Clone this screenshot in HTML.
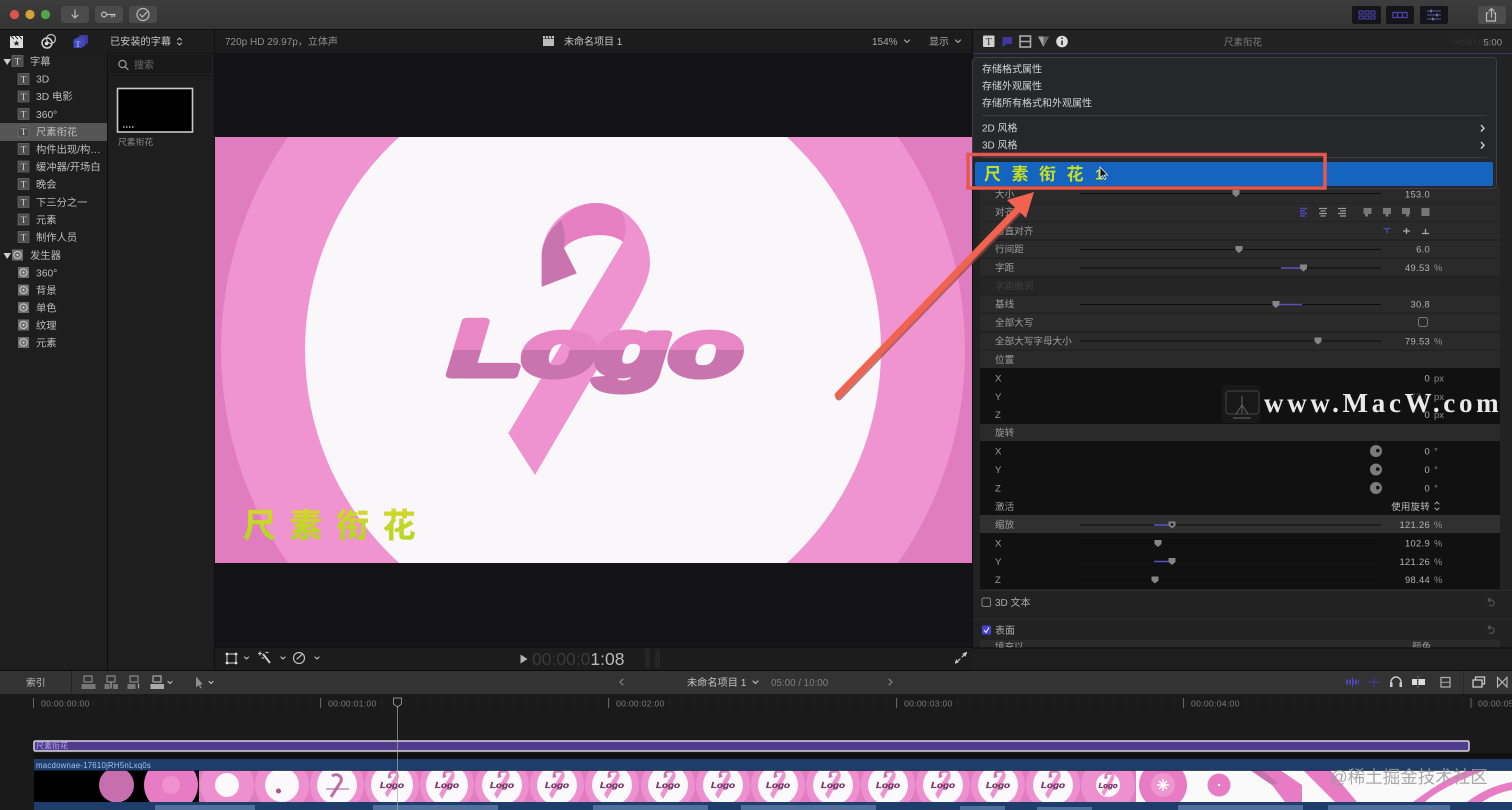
<!DOCTYPE html>
<html lang="zh">
<head>
<meta charset="utf-8">
<title>Final Cut Pro</title>
<style>
html,body{margin:0;padding:0;background:#1b1b1b;width:1512px;height:810px;overflow:hidden}
svg{display:block;position:absolute;left:0;top:0}
text{font-family:"Liberation Sans","Noto Sans CJK SC",sans-serif;font-size:10px;fill:#b4b4b4}
.s{fill:#bdbdbd;font-size:10.3px}
.l{fill:#9c9c9c;font-size:9.6px}
.m{fill:#d2d2d2;font-size:10px}
.v{fill:#b2b2b2;font-size:9.4px;text-anchor:end;letter-spacing:.3px}
.u{fill:#8f8f8f;font-size:9.4px}
.r{fill:#7a7a7a;font-size:8.6px;letter-spacing:.3px}
.ti{font-family:"Liberation Serif",serif;font-size:9.5px;fill:#d0d0d0;text-anchor:middle}
.lg{font-family:"Liberation Sans",sans-serif;font-weight:bold;font-style:italic;font-size:8.5px;fill:#7d3a6c;stroke:#7d3a6c;stroke-width:.35px;text-anchor:middle}
.ic{fill:none;stroke:#bdbdbd;stroke-width:1.2;stroke-linecap:round;stroke-linejoin:round}
</style>
</head>
<body>
<svg width="1512" height="810" viewBox="0 0 1512 810" xmlns="http://www.w3.org/2000/svg">
<defs>
<linearGradient id="tb" x1="0" y1="0" x2="0" y2="1"><stop offset="0" stop-color="#3d3d3d"/><stop offset="1" stop-color="#333"/></linearGradient>
<linearGradient id="lgf" gradientUnits="userSpaceOnUse" x1="0" y1="318" x2="0" y2="396"><stop offset=".41" stop-color="#e886c6"/><stop offset=".41" stop-color="#c974ae"/></linearGradient>
<linearGradient id="yg" x1="0" y1="0" x2="0" y2="1"><stop offset="0" stop-color="#d6d82a"/><stop offset="1" stop-color="#a6da22"/></linearGradient>
<clipPath id="vp"><rect x="215" y="137" width="757" height="426"/></clipPath>
<clipPath id="th"><rect x="34" y="770" width="1478" height="32"/></clipPath>
<path id="h" d="M-3.5,-3.5H3.5V.5L0,3.5L-3.5,.5Z" fill="#858585"/>
<g id="ticon"><rect x="-5.5" y="-5.5" width="11" height="11" fill="#4c4c4c" stroke="#777" stroke-width=".6"/></g>
<g id="gicon"><rect x="-5.5" y="-5.5" width="11" height="11" fill="#6e6e6e"/><circle r="3.6" fill="none" stroke="#c4c4c4" stroke-width="1.1"/><circle r="1" fill="#ddd"/></g>
<g id="dial"><circle r="6" fill="#7c7c7c"/><circle cx="1.8" cy="-.4" r="1.9" fill="#171717"/></g>
<g id="rb" transform="translate(-580,-340)">
<path d="M541.7,286.7L576.7,273.3L564,248.3C570,238 605,228 623,241.7L508.3,433.3L535,475L620,330C645,290 650,275 650,263C650,230 625,203 596,203C565,203 542,230 541.7,256Z" fill="#ef93d0"/>
<path d="M561,220C567,236 565,241 564,248.3C570,238 605,228 623,241.7C627,232 626,222 622,212C612,205 604,203 596,203C582,203 570,210 561,220Z" fill="#e57fc2"/>
<path d="M541.7,286.7L576.7,273.3L564,248.3C565,240 566,232 561,220C549,230 542,243 541.7,256Z" fill="#c973ae"/>
</g>
</defs>

<!-- base -->
<rect width="1512" height="810" fill="#1e1e1e"/>
<rect width="1512" height="29" fill="url(#tb)"/>
<rect y="29" width="1512" height="1" fill="#111"/>
<!-- traffic lights -->
<circle cx="14.5" cy="14.5" r="4.6" fill="#d9544f"/><circle cx="30" cy="14.5" r="4.6" fill="#d3a336"/><circle cx="45.5" cy="14.5" r="4.6" fill="#4fa64f"/>
<rect x="61" y="6" width="28" height="17" rx="3" fill="#4b4b4b"/><rect x="95" y="6" width="28" height="17" rx="3" fill="#4b4b4b"/><rect x="129" y="6" width="28" height="17" rx="3" fill="#4b4b4b"/>
<path class="ic" d="M75,10V18M72,15L75,18L78,15"/>
<circle class="ic" cx="104" cy="14.5" r="2.4"/><path class="ic" d="M106.5,14.5H115M112,14.5V17M114.5,14.5V16.5"/>
<circle class="ic" cx="143" cy="14.5" r="6"/><path class="ic" d="M140,14.5L142.3,17L147,12"/>
<rect x="1352" y="6" width="29" height="18" rx="2" fill="#151519"/><rect x="1386" y="6" width="28" height="18" rx="2" fill="#151519"/><rect x="1420" y="6" width="28" height="18" rx="2" fill="#151519"/>
<path d="M1359,11h4v3h-4zM1365,11h4v3h-4zM1371,11h4v3h-4zM1359,16h4v3h-4zM1365,16h4v3h-4zM1371,16h4v3h-4z" fill="none" stroke="#4f45b8"/>
<path d="M1393,12.5h14v5h-14zM1397.5,12.5v5M1402.5,12.5v5" fill="none" stroke="#4f45b8" stroke-width="1.2"/>
<path d="M1427,11h14M1427,15h14M1427,19h14" stroke="#5d55b0"/><path d="M1431,9.5v3M1437,13.5v3M1433,17.5v3" stroke="#aaa"/>
<rect x="1478" y="6" width="28" height="18" rx="2" fill="#4d4d4d"/>
<path class="ic" d="M1488,13h-1.5v8h9v-8H1494M1491.5,17V9M1489,11L1491.5,8.5L1494,11"/>

<!-- second row -->
<rect y="30" width="215" height="23" fill="#1d1d1d"/>
<rect x="215" y="30" width="757" height="23" fill="#1c1c1c"/>
<rect y="53" width="215" height="617" fill="#1e1e1e"/>
<rect x="107" y="53" width="1" height="617" fill="#0e0e0e"/><rect x="214" y="30" width="1" height="640" fill="#0e0e0e"/>
<rect x="108" y="52.5" width="107" height="1" fill="#141414"/>
<!-- lib icons -->
<rect x="10" y="39" width="13" height="9" fill="#ddd"/><path d="M10,36H23V39H10Z" fill="#eee"/><path d="M11,36L14,39M15,36L18,39M19,36L22,39" stroke="#222"/><path d="M16.5,40.5l1,2h2l-1.6,1.3.6,2-2-1.2-2,1.2.6-2-1.6-1.3h2z" fill="#222"/>
<circle cx="47" cy="43" r="5" fill="none" stroke="#d0d0d0" stroke-width="1.5"/><circle cx="51" cy="39" r="4.5" fill="none" stroke="#c0c0c0" stroke-width="1.2"/><circle cx="46.5" cy="43.5" r="1.8" fill="#ddd"/>
<rect x="79" y="35" width="9" height="9" rx="1" fill="#3f3aa0"/><rect x="76" y="37.5" width="9" height="9" rx="1" fill="#4a44c0"/><rect x="73.5" y="39" width="9" height="9" rx="1" fill="#3d49b8"/>
<text x="78" y="47" style="fill:#cfd2ff;font-family:'Liberation Serif',serif;font-size:8px;text-anchor:middle">T</text>
<text x="110" y="45" class="m" style="font-size:10.2px;fill:#c8c8c8">已安装的字幕</text>
<path class="ic" d="M177.5,40L179.5,38L181.5,40M177.5,43L179.5,45L181.5,43" style="stroke-width:1"/>

<!-- search -->
<rect x="110" y="55" width="102" height="18" fill="#191919"/>
<circle class="ic" cx="122.5" cy="64" r="3.6" style="stroke:#9a9a9a"/><path class="ic" d="M125,66.7L128,69.5" style="stroke:#9a9a9a"/>
<text x="134" y="68.5" style="fill:#6b6b6b;font-size:10px">搜索</text>
<rect x="108" y="75" width="106" height="1" fill="#151515"/>
<rect x="117.5" y="88.5" width="75" height="43.5" fill="#000" stroke="#c8c8c8" stroke-width="1.6"/>
<path d="M123,127h1.5M126,127h1.5M129,127h1.5M132,127h1.5" stroke="#888" stroke-width="2"/>
<text x="118" y="145" style="fill:#8d8d8d;font-size:8.8px">尺素衔花</text>

<!-- sidebar -->
<rect y="123" width="107" height="18" fill="#555"/>
<path d="M3.5,59H11L7.2,65Z" fill="#cfcfcf"/>
<use href="#ticon" x="17.5" y="61"/><text class="ti" x="17.5" y="64.5">T</text>
<text class="s" x="30" y="65">字幕</text>
<use href="#ticon" x="23.5" y="79"/><text class="ti" x="23.5" y="82.5">T</text><text class="s" x="36" y="82.5">3D</text>
<use href="#ticon" x="23.5" y="96.5"/><text class="ti" x="23.5" y="100">T</text><text class="s" x="36" y="100">3D 电影</text>
<use href="#ticon" x="23.5" y="114"/><text class="ti" x="23.5" y="117.5">T</text><text class="s" x="36" y="118">360°</text>
<use href="#ticon" x="23.5" y="131.5"/><text class="ti" x="23.5" y="135">T</text><text class="s" x="36" y="135.5">尺素衔花</text>
<use href="#ticon" x="23.5" y="149"/><text class="ti" x="23.5" y="152.5">T</text><text class="s" x="36" y="153">构件出现/构…</text>
<use href="#ticon" x="23.5" y="166.5"/><text class="ti" x="23.5" y="170">T</text><text class="s" x="36" y="170.5">缓冲器/开场白</text>
<use href="#ticon" x="23.5" y="184"/><text class="ti" x="23.5" y="187.5">T</text><text class="s" x="36" y="188">晚会</text>
<use href="#ticon" x="23.5" y="202"/><text class="ti" x="23.5" y="205.5">T</text><text class="s" x="36" y="206">下三分之一</text>
<use href="#ticon" x="23.5" y="219.5"/><text class="ti" x="23.5" y="223">T</text><text class="s" x="36" y="223.5">元素</text>
<use href="#ticon" x="23.5" y="237"/><text class="ti" x="23.5" y="240.5">T</text><text class="s" x="36" y="241">制作人员</text>
<path d="M3.5,253H11L7.2,259Z" fill="#cfcfcf"/>
<use href="#gicon" x="17.5" y="255"/><text class="s" x="30" y="259">发生器</text>
<use href="#gicon" x="23.5" y="272.5"/><text class="s" x="36" y="276.5">360°</text>
<use href="#gicon" x="23.5" y="290"/><text class="s" x="36" y="294">背景</text>
<use href="#gicon" x="23.5" y="307.5"/><text class="s" x="36" y="311.5">单色</text>
<use href="#gicon" x="23.5" y="325"/><text class="s" x="36" y="329">纹理</text>
<use href="#gicon" x="23.5" y="342.5"/><text class="s" x="36" y="346.5">元素</text>

<!-- viewer header -->
<text x="225" y="45" style="fill:#8f8f8f;font-size:10px">720p HD 29.97p，立体声</text>
<rect x="543" y="39" width="11" height="7" fill="#bbb"/><path d="M543,36h11v2.5h-11z" fill="#ccc"/><path d="M545,36l1,2.5M548,36l1,2.5M551,36l1,2.5" stroke="#222"/>
<text x="564" y="45" style="fill:#c2c2c2;font-size:10px">未命名项目 1</text>
<text x="872" y="45" style="fill:#a8a8a8;font-size:10px">154%</text><path class="ic" d="M904.5,40L907,42.5L909.5,40" style="stroke:#aaa"/>
<text x="929" y="45" style="fill:#a8a8a8;font-size:10px">显示</text><path class="ic" d="M955.5,40L958,42.5L960.5,40" style="stroke:#aaa"/>

<!-- viewer -->
<rect x="215" y="53" width="757" height="595" fill="#141416"/>
<g clip-path="url(#vp)">
<rect x="215" y="137" width="757" height="426" fill="#e07cc0"/>
<circle cx="593" cy="350" r="372" fill="#ef93d1"/>
<circle cx="593" cy="350" r="288" fill="#f9f7fa"/>
<use href="#rb" x="580" y="340"/>
<text x="0" y="375" transform="translate(449,0) scale(1.54,1)" style="font-family:'Liberation Sans',sans-serif;font-weight:bold;font-style:italic;font-size:78px;fill:url(#lgf);stroke:url(#lgf);stroke-width:7px;stroke-linejoin:round">Logo</text>
<text x="243" y="537" style="font-size:33px;font-weight:bold;letter-spacing:13.5px;fill:url(#yg);stroke:#d8c92a;stroke-width:.4px">尺素衔花</text>
</g>

<!-- viewer controls -->
<rect x="215" y="648" width="757" height="22" fill="#1c1c1c"/>
<rect x="215" y="647" width="757" height="1" fill="#101010"/>
<rect x="227" y="654" width="9" height="9" fill="none" stroke="#c4c4c4" stroke-width="1.1"/>
<circle cx="227" cy="654" r="1.4" fill="#ddd"/><circle cx="236" cy="654" r="1.4" fill="#ddd"/><circle cx="227" cy="663" r="1.4" fill="#ddd"/><circle cx="236" cy="663" r="1.4" fill="#ddd"/>
<path class="ic" d="M244.5,657L246.5,659L248.5,657M281,657L283,659L285,657M315,657L317,659L319,657"/>
<path d="M263,654L270,663" stroke="#ccc" stroke-width="2"/><path class="ic" d="M260,652v3M258.5,653.5h3M266,652.5h2M262,658h1.5"/>
<circle class="ic" cx="299" cy="658" r="5.5"/><path class="ic" d="M297,659L302,654.5"/>
<path d="M520.5,654.5L527.5,659L520.5,663.5Z" fill="#b5b5b5"/>
<text x="532" y="665" style="font-size:17.5px;fill:#3b3b3b">00:00:0<tspan style="fill:#b9b9b9">1:08</tspan></text>
<rect x="645" y="649" width="5" height="19" fill="#262626"/><rect x="655" y="649" width="5" height="19" fill="#262626"/>
<path class="ic" d="M963,654l3.5,-1.5l-1.5,3.5M965.5,653.5L962,657M958,662l-2.5,1l1,-3M956.5,662.5L960,659" style="stroke:#ccc"/>

<!-- inspector -->
<rect x="972" y="30" width="540" height="640" fill="#222"/>
<rect x="972" y="30" width="1" height="640" fill="#0e0e0e"/>
<rect x="973" y="53" width="539" height="1" fill="#3a3570"/>
<rect x="983" y="35.5" width="11.5" height="11.5" rx="1" fill="#cfcfcf"/><text x="988.7" y="45" style="font-family:'Liberation Serif',serif;font-size:10px;fill:#333;text-anchor:middle">T</text>
<path d="M1002.5,37H1012V44H1006L1003,47H1002.5Z" fill="#3e389f"/>
<rect x="1020" y="36" width="10.5" height="11" fill="none" stroke="#aaa" stroke-width="1.6"/><path d="M1020,41.5H1030" stroke="#aaa" stroke-width="1.5"/>
<path d="M1038,36.5H1049L1043.5,47Z" fill="#a2a2a2"/><path d="M1043.5,36.5H1049L1043.5,47Z" fill="#636363"/>
<circle cx="1062" cy="41.5" r="5.8" fill="#dcdcdc"/><path d="M1062,40.5V45M1062,37.5V39" stroke="#222" stroke-width="1.5"/>
<text x="1243" y="45.5" style="fill:#7c7c7c;font-size:9.5px;text-anchor:middle">尺素衔花</text>
<text x="1502" y="45.5" style="fill:#333;font-size:9.5px;text-anchor:end">00:00:0<tspan style="fill:#9a9a9a">5:00</tspan></text>

<!-- rows -->
<g fill="#2a2a2a">
<rect x="980" y="186" width="520" height="17"/>
<rect x="980" y="204" width="520" height="17"/>
<rect x="980" y="222" width="520" height="17"/>
<rect x="980" y="241" width="520" height="16.5"/>
<rect x="980" y="259" width="520" height="16.5"/>
<rect x="980" y="278" width="520" height="16.5" fill="#252525"/>
<rect x="980" y="296" width="520" height="16.5"/>
<rect x="980" y="314" width="520" height="16.5"/>
<rect x="980" y="333" width="520" height="16.5"/>
<rect x="980" y="351" width="520" height="17"/>
<rect x="980" y="424" width="520" height="17"/>
<rect x="980" y="515" width="520" height="18" fill="#303030"/>
</g>
<rect x="980" y="368" width="520" height="56" fill="#111"/>
<rect x="980" y="441" width="520" height="74" fill="#111"/>
<rect x="980" y="533" width="520" height="56" fill="#111"/>
<rect x="973" y="590" width="539" height="1" fill="#2c2c2c"/>
<rect x="973" y="618.5" width="539" height="1" fill="#2c2c2c"/>
<rect x="980" y="640" width="520" height="8" fill="#2a2a2a"/>

<g>
<text class="l" x="995" y="197.5">大小</text>
<text class="l" x="995" y="215.5">对齐</text>
<text class="l" x="995" y="234.5">垂直对齐</text>
<text class="l" x="995" y="252.5">行间距</text>
<text class="l" x="995" y="271">字距</text>
<text class="l" x="995" y="289.5" style="fill:#3f3f3f">字距微调</text>
<text class="l" x="995" y="307.5">基线</text>
<text class="l" x="995" y="326">全部大写</text>
<text class="l" x="995" y="344.5">全部大写字母大小</text>
<text class="l" x="995" y="363">位置</text>
<text class="l" x="995" y="381.5">X</text>
<text class="l" x="995" y="400">Y</text>
<text class="l" x="995" y="418">Z</text>
<text class="l" x="995" y="436">旋转</text>
<text class="l" x="995" y="454.5">X</text>
<text class="l" x="995" y="473">Y</text>
<text class="l" x="995" y="491.5">Z</text>
<text class="l" x="995" y="510">激活</text>
<text class="l" x="995" y="528">缩放</text>
<text class="l" x="995" y="546.5">X</text>
<text class="l" x="995" y="565">Y</text>
<text class="l" x="995" y="583">Z</text>
</g>
<!-- sliders -->
<g stroke="#0c0c0c" stroke-width="1">
<path d="M1080,193.5H1381M1080,249.5H1381M1080,268H1381M1080,304.5H1381M1080,341H1381M1080,525H1381M1080,543.5H1381M1080,561.5H1381M1080,580H1381"/>
</g>
<path d="M1281,268H1303M1276,304.5H1302M1154,525H1172M1154,561.5H1172" stroke="#5a4fc0" stroke-width="1.5"/>
<use href="#h" x="1236" y="193.5"/><use href="#h" x="1239" y="249.5"/><use href="#h" x="1303.5" y="268"/><use href="#h" x="1276" y="304.5"/><use href="#h" x="1318" y="341"/>
<use href="#h" x="1172" y="525"/><circle cx="1172" cy="524.5" r="1.5" fill="#222"/><use href="#h" x="1158" y="543.5"/><use href="#h" x="1172" y="561.5"/><use href="#h" x="1155" y="580"/>
<g>
<text class="v" x="1430" y="197.5">153.0</text>
<text class="v" x="1430" y="252.5">6.0</text>
<text class="v" x="1430" y="271">49.53</text><text class="u" x="1434" y="271">%</text>
<text class="v" x="1430" y="307.5">30.8</text>
<text class="v" x="1430" y="344.5">79.53</text><text class="u" x="1434" y="344.5">%</text>
<text class="v" x="1430" y="381.5">0</text><text class="u" x="1434" y="381.5">px</text>
<text class="v" x="1430" y="400" style="fill:#555">-72.0</text><text class="u" x="1434" y="400">px</text>
<text class="v" x="1430" y="418">0</text><text class="u" x="1434" y="418">px</text>
<text class="v" x="1430" y="454.5">0</text><text class="u" x="1434" y="454.5">°</text>
<text class="v" x="1430" y="473">0</text><text class="u" x="1434" y="473">°</text>
<text class="v" x="1430" y="491.5">0</text><text class="u" x="1434" y="491.5">°</text>
<text class="v" x="1430" y="510" style="fill:#c0c0c0">使用旋转</text>
<path class="ic" d="M1435,504L1437,502L1439,504M1435,508L1437,510L1439,508" style="stroke:#aaa;stroke-width:1"/>
<text class="v" x="1430" y="528">121.26</text><text class="u" x="1434" y="528">%</text>
<text class="v" x="1430" y="546.5">102.9</text><text class="u" x="1434" y="546.5">%</text>
<text class="v" x="1430" y="565">121.26</text><text class="u" x="1434" y="565">%</text>
<text class="v" x="1430" y="583">98.44</text><text class="u" x="1434" y="583">%</text>
</g>
<use href="#dial" x="1376" y="451"/><use href="#dial" x="1376" y="469.5"/><use href="#dial" x="1376" y="488"/>
<rect x="1418.5" y="317.5" width="9" height="9" rx="2" fill="none" stroke="#777"/>
<!-- align icons -->
<path d="M1300,208.5H1307M1300,211H1305M1300,213.5H1307M1300,216H1305" stroke="#4f45b8" stroke-width="1.5"/>
<path d="M1319,208.5H1327M1320.5,211H1325.5M1319,213.5H1327M1320.5,216H1325.5" stroke="#999" stroke-width="1.2"/>
<path d="M1338,208.5H1346M1340,211H1346M1338,213.5H1346M1340,216H1346" stroke="#999" stroke-width="1.2"/>
<rect x="1363.5" y="208" width="8" height="6" fill="#777"/><rect x="1365" y="214" width="3" height="2.5" fill="#777"/>
<rect x="1383" y="208" width="8" height="6" fill="#777"/><rect x="1385.5" y="214" width="3" height="2.5" fill="#777"/>
<rect x="1402" y="208" width="8" height="6" fill="#777"/><rect x="1406" y="214" width="3" height="2.5" fill="#777"/>
<rect x="1421.5" y="208" width="8" height="8" fill="#777"/>
<path d="M1383.5,228.5H1390.5M1387,228.5V233" stroke="#4f45b8" stroke-width="1.3"/>
<path d="M1403,231H1410M1406.5,228V234" stroke="#aaa" stroke-width="1.3"/>
<path d="M1422,233.5H1429M1425.5,229V233.5" stroke="#aaa" stroke-width="1.3"/>

<!-- 3d / surface -->
<rect x="982" y="598" width="8.5" height="8.5" rx="1.5" fill="none" stroke="#808080"/>
<text x="995" y="606" style="fill:#aaa;font-size:10px">3D 文本</text>
<path class="ic" d="M1488,600H1491.5A3,3 0 1 1 1489.5,605.5M1488,600L1490,598M1488,600L1490,602" style="stroke:#5f5f5f;stroke-width:1"/>
<rect x="982" y="625.5" width="9" height="9" rx="1.5" fill="#4a42d0"/><path d="M984,630L986,632.5L989,627.5" stroke="#fff" fill="none"/>
<text x="995" y="634" style="fill:#aaa;font-size:10px">表面</text>
<path class="ic" d="M1488,627.5H1491.5A3,3 0 1 1 1489.5,633M1488,627.5L1490,625.5M1488,627.5L1490,629.5" style="stroke:#5f5f5f;stroke-width:1"/>
<text class="l" x="995" y="650">填充以</text><text class="l" x="1412" y="650">颜色</text>
<rect x="972" y="647.5" width="540" height="23" fill="#1e1e1e"/>
<rect x="972" y="647.5" width="540" height="1" fill="#0a0a0a"/>

<!-- menu -->
<rect x="972.5" y="57.5" width="524" height="131" rx="4" fill="#25272a" stroke="#3c3e40"/>
<text class="m" x="982" y="72.5">存储格式属性</text>
<text class="m" x="982" y="89.5">存储外观属性</text>
<text class="m" x="982" y="106.5">存储所有格式和外观属性</text>
<rect x="982" y="115" width="505" height="1" fill="#3b3d3f"/>
<text class="m" x="982" y="131.5">2D 风格</text>
<text class="m" x="982" y="148.5">3D 风格</text>
<path d="M1481,125L1484,128.3L1481,131.5M1481,142L1484,145.3L1481,148.5" fill="none" stroke="#ddd" stroke-width="1.3"/>
<rect x="982" y="157" width="505" height="1" fill="#3b3d3f"/>
<rect x="975" y="162" width="518" height="24" rx="2" fill="#1565c0"/>
<text x="984" y="180" style="font-size:17px;font-weight:bold;letter-spacing:10.5px;fill:#c6de22">尺素衔花</text>
<text x="1095" y="179.5" style="font-size:15px;font-weight:bold;fill:#c6de22">1</text>
<path d="M1100,167V178L1102.5,175.5L1104.5,179.5L1106,178.8L1104,175H1107.5Z" fill="#111" stroke="#eee" stroke-width=".8"/>

<!-- red box + arrow -->
<rect x="968" y="154.5" width="357" height="33.5" fill="none" stroke="#e8574c" stroke-width="3.5"/>
<path d="M838,396L1019,209" stroke="#9a4a44" stroke-width="7" stroke-linecap="round" transform="translate(.8,1)" opacity=".7"/>
<path d="M838,395L1019,208" stroke="#f1634f" stroke-width="6.5" stroke-linecap="round"/>
<path d="M1034,192L1007,200L1026,218Z" fill="#f1634f"/>

<!-- watermark -->
<rect x="1222" y="385" width="38" height="38" rx="4" fill="#1b1b1b" opacity=".7"/>
<rect x="1226" y="391" width="33" height="23" rx="3" fill="none" stroke="#444"/>
<path d="M1242,396V413M1236,414L1242,405L1248,414M1233,418H1251" fill="none" stroke="#666"/>
<text x="1264" y="412" style="font-family:'Liberation Serif',serif;font-weight:bold;font-size:27px;letter-spacing:3.7px;fill:#e9e9e9">www.MacW.com</text>

<!-- timeline toolbar -->
<rect y="670" width="1512" height="1" fill="#0c0c0c"/>
<rect y="671" width="1512" height="23" fill="#333"/>
<rect x="71" y="671" width="1" height="23" fill="#242424"/>
<text x="26" y="686" style="fill:#bdbdbd;font-size:9.8px">索引</text>
<path class="ic" d="M84,676h8v6h-8z" style="stroke:#888"/><rect x="81.5" y="684" width="14" height="5" fill="#777"/>
<path class="ic" d="M107,676h8v6h-8z" style="stroke:#888"/><rect x="104.5" y="684" width="5" height="5" fill="#777"/><rect x="113" y="684" width="5" height="5" fill="#777"/><path class="ic" d="M111,683V688" style="stroke:#aaa"/>
<path class="ic" d="M130,676h8v6h-8z" style="stroke:#888"/><rect x="127.5" y="684" width="8" height="5" fill="#777"/><path class="ic" d="M138.5,684V688" style="stroke:#aaa"/>
<path class="ic" d="M153,676h8v6h-8z" style="stroke:#aaa"/><rect x="150.5" y="684" width="13.5" height="5" fill="#aaa"/>
<path class="ic" d="M168,681.5L170,683.5L172,681.5M209,681.5L211,683.5L213,681.5"/>
<path d="M196,676.5V687.5L198.5,685L200.5,688.5L201.5,688L200,684.5H203Z" fill="#8e8e8e"/>
<path class="ic" d="M623,679L620,682L623,685M889,679L892,682L889,685" style="stroke:#888"/>
<text x="687" y="686" style="fill:#c2c2c2;font-size:10.2px">未命名项目 1</text>
<path class="ic" d="M753,681L755.5,683.5L758,681"/>
<text x="771" y="686" style="fill:#7e7e7e;font-size:9.8px">05:00 / 10:00</text>
<path d="M1346,682H1359" stroke="#4f45b8" stroke-width="5" stroke-dasharray="2 1"/><path d="M1352.5,677V687" stroke="#4f45b8"/>
<path d="M1368,682H1380M1374,677V687" stroke="#3f3a90" stroke-width="1.3"/>
<path class="ic" d="M1391,685V682A5,5 0 0 1 1401,682V685" style="stroke:#ccc;stroke-width:1.4"/><rect x="1390" y="682.5" width="2.5" height="4.5" fill="#ccc"/><rect x="1399.5" y="682.5" width="2.5" height="4.5" fill="#ccc"/>
<rect x="1412" y="679" width="5" height="6" fill="#ddd"/><rect x="1418.5" y="679" width="6.5" height="6" fill="#ddd"/><path d="M1418,676V688" stroke="#888" stroke-dasharray="1.5 1"/>
<rect x="1441" y="677.5" width="9" height="9.5" fill="none" stroke="#aaa" stroke-width="1.3"/><path d="M1441,682.3H1450" stroke="#aaa"/>
<rect x="1463" y="671" width="1" height="23" fill="#292929"/>
<rect x="1473" y="680" width="9" height="7" fill="none" stroke="#ccc" stroke-width="1.3"/><path d="M1475.5,680V677H1484.5V684H1482" fill="none" stroke="#ccc" stroke-width="1.3"/>
<path d="M1497.5,677.5V687L1507,677.5V687Z" fill="none" stroke="#bbb" stroke-width="1.1"/>

<!-- timeline -->
<rect y="694" width="1512" height="116" fill="#1a1a1b"/>
<path d="M33,703H1512" stroke="#232323" stroke-width="7" stroke-dasharray="1 11"/>
<path d="M33.5,698V708M320.5,698V708M608.5,698V708M896.5,698V708M1183.5,698V708M1471,698V708" stroke="#666"/>
<text class="r" x="41" y="706.5">00:00:00:00</text>
<text class="r" x="328" y="706.5">00:00:01:00</text>
<text class="r" x="616" y="706.5">00:00:02:00</text>
<text class="r" x="904" y="706.5">00:00:03:00</text>
<text class="r" x="1191" y="706.5">00:00:04:00</text>
<text class="r" x="1478" y="706.5">00:00:05</text>

<!-- title clip -->
<rect x="34" y="741" width="1435" height="10" rx="1.5" fill="#4f3a8c" stroke="#d8d8e0" stroke-width="1.5"/>
<text x="36" y="748.7" style="fill:#b9a5f0;font-size:8px">尺素衔花</text>
<rect x="33" y="753" width="1479" height="6" fill="#141210"/>

<!-- video clip -->
<rect x="34" y="759" width="1478" height="51" fill="#1d3d6a"/>
<text x="36" y="768" style="fill:#a9c2e6;font-size:7.8px;letter-spacing:.25px">macdownae-17610jRH5nLxq0s</text>
<rect x="34" y="770" width="165" height="32" fill="#000"/>
<g clip-path="url(#th)">
<circle cx="116.5" cy="785" r="17.5" fill="#c76fae"/>
<circle cx="171" cy="785" r="27" fill="#e87cc4"/><circle cx="171" cy="785" r="9" fill="#f090cf"/>
<rect x="199" y="770" width="937" height="32" fill="#e27cc0"/>
<rect x="1136" y="770" width="376" height="32" fill="#fafafa"/>
<g fill="#ee90cf">
<circle cx="227" cy="785" r="27"/><circle cx="282" cy="785" r="27"/><circle cx="337" cy="785" r="27"/><circle cx="392" cy="785" r="27"/><circle cx="447" cy="785" r="27"/><circle cx="502" cy="785" r="27"/><circle cx="557" cy="785" r="27"/><circle cx="612" cy="785" r="27"/><circle cx="668" cy="785" r="27"/><circle cx="723" cy="785" r="27"/><circle cx="778" cy="785" r="27"/><circle cx="833" cy="785" r="27"/><circle cx="888" cy="785" r="27"/><circle cx="943" cy="785" r="27"/><circle cx="998" cy="785" r="27"/><circle cx="1053" cy="785" r="27"/><circle cx="1108" cy="785" r="27"/>
</g>
<g fill="#fbf9fb">
<circle cx="227" cy="785" r="12"/><circle cx="282" cy="785" r="17"/><circle cx="337" cy="785" r="20"/><circle cx="392" cy="785" r="21"/><circle cx="447" cy="785" r="21"/><circle cx="502" cy="785" r="20"/><circle cx="557" cy="785" r="20"/><circle cx="612" cy="785" r="20"/><circle cx="668" cy="785" r="20"/><circle cx="723" cy="785" r="20"/><circle cx="778" cy="785" r="20"/><circle cx="833" cy="785" r="20"/><circle cx="888" cy="785" r="20"/><circle cx="943" cy="785" r="20"/><circle cx="998" cy="785" r="20"/><circle cx="1053" cy="785" r="20"/><circle cx="1108" cy="785" r="12"/>
</g>
<circle cx="278.5" cy="791" r="2.5" fill="#a85590"/>
<path d="M332,776C338,772 344,778 340,783L331,797" fill="none" stroke="#c06aa6" stroke-width="3"/><path d="M326,789H349" stroke="#a85590" stroke-width="1"/>
<use href="#rb" transform="translate(392,784) scale(.1)"/><text class="lg" x="392" y="788" textLength="24" lengthAdjust="spacingAndGlyphs">Logo</text>
<use href="#rb" transform="translate(447,784) scale(.11)"/><text class="lg" x="447" y="788" textLength="24" lengthAdjust="spacingAndGlyphs">Logo</text>
<use href="#rb" transform="translate(502,784) scale(.11)"/><text class="lg" x="502" y="788" textLength="24" lengthAdjust="spacingAndGlyphs">Logo</text>
<use href="#rb" transform="translate(557,784) scale(.11)"/><text class="lg" x="557" y="788" textLength="24" lengthAdjust="spacingAndGlyphs">Logo</text>
<use href="#rb" transform="translate(612,784) scale(.11)"/><text class="lg" x="612" y="788" textLength="24" lengthAdjust="spacingAndGlyphs">Logo</text>
<use href="#rb" transform="translate(668,784) scale(.11)"/><text class="lg" x="668" y="788" textLength="24" lengthAdjust="spacingAndGlyphs">Logo</text>
<use href="#rb" transform="translate(723,784) scale(.11)"/><text class="lg" x="723" y="788" textLength="24" lengthAdjust="spacingAndGlyphs">Logo</text>
<use href="#rb" transform="translate(778,784) scale(.11)"/><text class="lg" x="778" y="788" textLength="24" lengthAdjust="spacingAndGlyphs">Logo</text>
<use href="#rb" transform="translate(833,784) scale(.11)"/><text class="lg" x="833" y="788" textLength="24" lengthAdjust="spacingAndGlyphs">Logo</text>
<use href="#rb" transform="translate(888,784) scale(.11)"/><text class="lg" x="888" y="788" textLength="24" lengthAdjust="spacingAndGlyphs">Logo</text>
<use href="#rb" transform="translate(943,784) scale(.11)"/><text class="lg" x="943" y="788" textLength="24" lengthAdjust="spacingAndGlyphs">Logo</text>
<use href="#rb" transform="translate(998,784) scale(.11)"/><text class="lg" x="998" y="788" textLength="24" lengthAdjust="spacingAndGlyphs">Logo</text>
<use href="#rb" transform="translate(1053,784) scale(.11)"/><text class="lg" x="1053" y="788" textLength="24" lengthAdjust="spacingAndGlyphs">Logo</text>
<use href="#rb" transform="translate(1108,784) scale(.09)"/><text class="lg" x="1108" y="788" textLength="19" lengthAdjust="spacingAndGlyphs" style="font-size:7px">Logo</text>
<circle cx="1163" cy="785" r="24" fill="#e87cc4"/><circle cx="1163" cy="785" r="12" fill="#ee96cf"/><path d="M1157,785H1169M1163,779V791M1159,781L1167,789M1167,781L1159,789" stroke="#fff" stroke-width="1.5"/>
<circle cx="1219" cy="785" r="11.5" fill="#e87cc4"/><circle cx="1219" cy="785" r="1.2" fill="#fff"/>
<path d="M1250,770H1280L1302,785V802H1285L1272,785ZM1303,770H1330L1357,802H1335ZM1413,802C1430,790 1450,775 1470,770H1485C1460,780 1435,792 1425,802ZM1467,802C1480,792 1495,785 1512,782V790C1500,792 1490,797 1482,802Z" fill="#e87cc4"/>
<path d="M1262,770L1278,783L1272,785L1250,770Z" fill="#c773ad"/>
</g>
<rect x="34" y="770" width="1478" height=".8" fill="#0f1f36"/>
<g fill="#4f709c">
<rect x="155" y="805" width="100" height="5"/><rect x="373" y="805" width="125" height="5"/><rect x="593" y="805" width="115" height="5"/><rect x="741" y="805" width="135" height="5"/><rect x="960" y="806" width="45" height="4"/><rect x="1037" y="807" width="55" height="3"/><rect x="1178" y="805" width="125" height="5"/><rect x="1328" y="805" width="122" height="5"/>
</g>
<path d="M397.5,698H401.5V704L397.5,707L393.5,704V698Z" fill="none" stroke="#8a8a8a"/>
<path d="M397.5,706V810" stroke="#a8a8a8" stroke-width="1" opacity=".7"/>
<text x="1330" y="783" style="font-size:17.5px;fill:#9a9a9a;fill-opacity:.85">@稀土掘金技术社区</text>
</svg>
</body>
</html>
